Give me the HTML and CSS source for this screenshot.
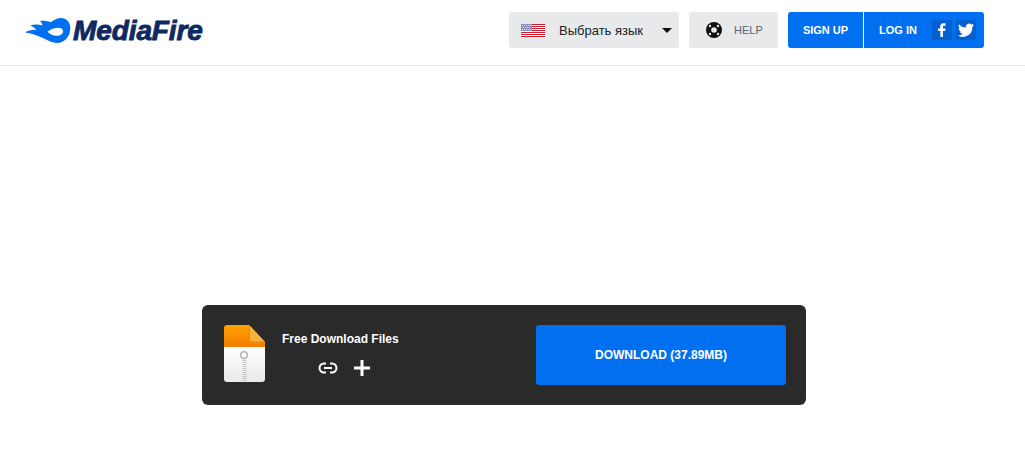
FILE: index.html
```html
<!DOCTYPE html>
<html lang="en">
<head>
<meta charset="utf-8">
<title>MediaFire</title>
<link rel="stylesheet" href="styles.css">
</head>
<body>
<header class="topbar">
  <a class="logo">
    <svg class="logo-flame" width="46" height="26" viewBox="0 0 46 26">
      <path fill="#0070f0" fill-rule="evenodd" d="M0 14.500C3 12.600 7 11.500 11.500 11.800C9.800 9.800 7.500 8.300 5 7.700C9 6.200 13.500 6.300 17.500 7.500C17.200 5.500 16.500 4.200 15 3C19 2.500 23 3.300 26 4.200C29 1.800 32.500 0 36 0C41.500 0 45.500 4.500 45.300 10.500C45.100 18.500 39.500 25 32 25C27 25 23 22.500 19 20.600C13 17.700 6.500 15.200 0 14.500ZM22.500 13.800C24.500 15.800 28 18 32 17.800C35.500 17.600 38 15.800 38 13.200C38 11 36.200 9.800 33.500 9.800C29.500 9.800 25.500 11.200 22.500 13.800Z"/>
    </svg>
    <span class="logo-text">MediaFire</span>
  </a>
  <nav class="actions">
    <div class="lang">
      <svg class="flag" width="24" height="13" viewBox="0 0 24 13">
        <rect width="24" height="13" fill="#fff"/>
        <path fill="#c8202f" d="M0 0h24v1H0zM0 2h24v1H0zM0 4h24v1H0zM0 6h24v1H0zM0 8h24v1H0zM0 10h24v1H0zM0 12h24v1H0z"/>
        <rect width="11" height="7" fill="#8f8fb8"/>
        <path fill="#dcdcea" d="M1 1h1v1H1zM3 1h1v1H3zM5 1h1v1H5zM7 1h1v1H7zM9 1h1v1H9zM2 3h1v1H2zM4 3h1v1H4zM6 3h1v1H6zM8 3h1v1H8zM1 5h1v1H1zM3 5h1v1H3zM5 5h1v1H5zM7 5h1v1H7zM9 5h1v1H9z"/>
      </svg>
      <span class="lang-label">Выбрать язык</span>
      <span class="caret"></span>
    </div>
    <div class="help">
      <svg width="16" height="16" viewBox="0 0 16 16">
        <circle cx="8" cy="8" r="8" fill="#111"/>
        <circle cx="8" cy="8" r="2.800" fill="#e8e9eb"/>
        <circle cx="4" cy="4" r="1.200" fill="#e8e9eb"/>
        <circle cx="12" cy="4" r="1.200" fill="#e8e9eb"/>
        <circle cx="4" cy="12" r="1.200" fill="#e8e9eb"/>
        <circle cx="12" cy="12" r="1.200" fill="#e8e9eb"/>
      </svg>
      <span class="help-label">HELP</span>
    </div>
    <div class="account">
      <span class="signup">SIGN UP</span>
      <span class="login">LOG IN</span>
      <span class="social">
        <svg width="20" height="20" viewBox="0 0 20 20"><path fill="#fff" d="M10.900 17v-6h2.200l.4-2.500h-2.600V7c0-.8.3-1.200 1.200-1.200h1.500V3.400c-.5-.1-1.200-.2-2-.2-2.100 0-3.400 1.200-3.400 3.400v1.900H6.100V11h2.300v6z"/></svg>
      </span>
      <span class="social">
        <svg width="20" height="20" viewBox="0 0 20 20"><path fill="#fff" d="M18 5.100c-.6.300-1.200.4-1.900.5.700-.4 1.200-1 1.400-1.800-.6.400-1.300.6-2.100.8a3.300 3.300 0 0 0-5.600 3C7.100 7.500 4.700 6.200 3.100 4.200c-.9 1.500-.4 3.400 1 4.400-.5 0-1-.2-1.500-.4 0 1.600 1.100 2.900 2.600 3.200-.5.100-1 .2-1.500.1.400 1.300 1.600 2.200 3 2.300A6.600 6.600 0 0 1 2 15.400a9.300 9.300 0 0 0 14.300-8.300c.7-.5 1.200-1.100 1.700-2z"/></svg>
      </span>
    </div>
  </nav>
</header>
<main class="page">
  <section class="card">
    <div class="file-icon">
      <svg width="41" height="57" viewBox="0 0 41 57">
        <defs>
          <linearGradient id="body" x1="0" y1="0" x2="0" y2="1"><stop offset="0" stop-color="#ffffff"/><stop offset="1" stop-color="#e9e9e9"/></linearGradient>
          <linearGradient id="top" x1="0" y1="0" x2="0" y2="1"><stop offset="0" stop-color="#ffa200"/><stop offset="1" stop-color="#f57c00"/></linearGradient>
        </defs>
        <path fill="url(#body)" d="M0 22h41v32a3 3 0 0 1-3 3H3a3 3 0 0 1-3-3z"/>
        <path fill="url(#top)" d="M3 0h22l16 17v5H0V3a3 3 0 0 1 3-3z"/>
        <path fill="#e58a10" d="M25 0v15a3 3 0 0 0 3 3h13v-1z"/>
        <path fill="#f7b23e" d="M26 1l14.500 15.500H28.500a2.500 2.500 0 0 1-2.500-2.500z"/>
        <circle cx="20" cy="30" r="3.400" fill="none" stroke="#b9b9b9" stroke-width="1.800"/>
        <path fill="none" stroke="#c4c4c4" stroke-width="4" stroke-dasharray="1 1" d="M20.500 35v21"/>
      </svg>
    </div>
    <div class="file-info">
      <div class="file-name">Free Download Files</div>
      <div class="file-tools">
        <svg width="20" height="12" viewBox="0 0 20 12"><path fill="none" stroke="#fff" stroke-width="2" d="M8 1.500H6a4.500 4.500 0 0 0 0 9h2M12 1.500h2a4.500 4.500 0 0 1 0 9h-2M6 6h8"/></svg>
        <svg width="16" height="16" viewBox="0 0 16 16"><path stroke="#fff" stroke-width="3" d="M8 0v16M0 8h16"/></svg>
      </div>
    </div>
    <a class="download">DOWNLOAD (37.89MB)</a>
  </section>
</main>
</body>
</html>
```
FILE: styles.css
```css
* { box-sizing: border-box; }
html, body { margin: 0; padding: 0; background: #fff; }
body { font-family: "Liberation Sans", Arial, sans-serif; height: 465px; overflow: hidden; }

.topbar {
  height: 66px;
  border-bottom: 1px solid #e6e6e6;
  display: flex;
  align-items: flex-start;
  justify-content: space-between;
  padding: 12px 41px 0 25px;
}
.logo { display: flex; align-items: center; height: 36px; }
.logo-flame { margin: 1px 2px 0 0; flex: none; }
.logo-text {
  font-weight: 700;
  font-style: italic;
  font-size: 28px;
  letter-spacing: -0.1px;
  color: #0f2a62;
  -webkit-text-stroke: 0.9px #0f2a62;
  margin-top: 1px;
}
.actions { display: flex; gap: 10px; }
.lang, .help, .account { height: 36px; border-radius: 3px; display: flex; align-items: center; }
.lang { width: 170px; background: #e8e9eb; padding: 0 7px 0 12px; }
.lang-label { margin-left: 14px; font-size: 13px; color: #222; flex: 1; }
.caret { width: 0; height: 0; border-left: 5px solid transparent; border-right: 5px solid transparent; border-top: 5px solid #111; }
.help { width: 89px; background: #e8e9eb; padding-left: 17px; gap: 12px; }
.help-label { font-size: 11px; color: #5c6470; }
.account { width: 196px; background: #006ff0; color: #fff; font-size: 11px; font-weight: 700; }
.signup { width: 76px; height: 100%; display: flex; align-items: center; justify-content: center; border-right: 1px solid #fff; }
.login { margin-left: 15px; margin-right: 15px; }
.social { width: 20px; height: 20px; background: #0560cf; border-radius: 2px; margin-right: 4px; display: flex; }

.page { padding: 239px 0 0 202px; }
.card {
  width: 604px;
  height: 100px;
  background: #2a2a2a;
  border-radius: 6px;
  display: flex;
  align-items: center;
  padding: 0 20px 0 22px;
}
.file-icon { width: 41px; height: 57px; display: flex; flex: none; margin-top: -3px; }
.file-info { margin-left: 17px; width: 254px; flex: none; display: flex; flex-direction: column; margin-top: -3px; }
.file-name { color: #fff; font-size: 12px; font-weight: 700; line-height: 14px; }
.file-tools { display: flex; align-items: center; gap: 16px; margin: 14px 0 0 36px; }
.download {
  width: 250px;
  height: 60px;
  flex: none;
  background: #006ff0;
  border-radius: 3px;
  color: #fff;
  font-size: 12px;
  font-weight: 700;
  display: flex;
  align-items: center;
  justify-content: center;
}
```
